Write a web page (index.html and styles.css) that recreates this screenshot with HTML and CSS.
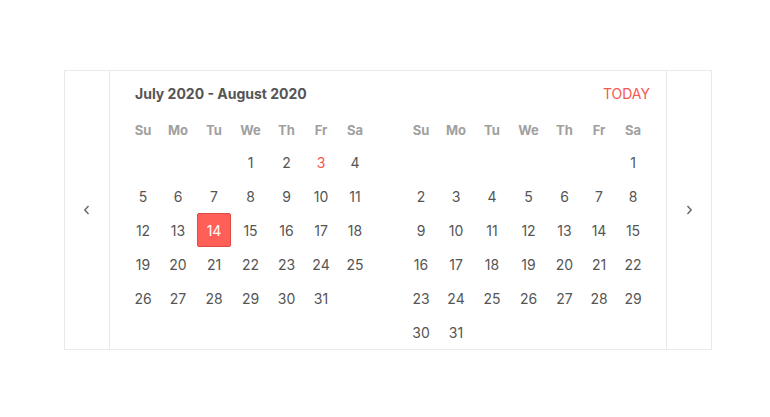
FILE: index.html
```html
<!DOCTYPE html>
<html lang="en">
<head>
  <meta charset="UTF-8">
  <meta name="viewport" content="width=device-width, initial-scale=1.0">
  <title>Date Picker</title>
  <link rel="stylesheet" href="styles.css">
</head>
<body>
  <div class="picker">
    <button class="nav-btn" aria-label="Previous month">
      <svg width="8" height="10" viewBox="0 0 8 10"><path d="M5.5 1 L1.8 5 L5.5 9" fill="none" stroke="#666" stroke-width="1.4"/></svg>
    </button>

    <div class="picker-body">
      <div class="picker-head">
        <span class="range-title">July 2020 - August 2020</span>
        <a href="#" class="today-link">TODAY</a>
      </div>

      <div class="months">
        <div class="month">
          <div class="wd">Su</div><div class="wd">Mo</div><div class="wd">Tu</div><div class="wd">We</div><div class="wd">Th</div><div class="wd">Fr</div><div class="wd">Sa</div>
          <div></div><div></div><div></div>
          <div class="day">1</div><div class="day">2</div><div class="day today">3</div><div class="day">4</div>
          <div class="day">5</div><div class="day">6</div><div class="day">7</div><div class="day">8</div><div class="day">9</div><div class="day">10</div><div class="day">11</div>
          <div class="day">12</div><div class="day">13</div><div class="day selected">14</div><div class="day">15</div><div class="day">16</div><div class="day">17</div><div class="day">18</div>
          <div class="day">19</div><div class="day">20</div><div class="day">21</div><div class="day">22</div><div class="day">23</div><div class="day">24</div><div class="day">25</div>
          <div class="day">26</div><div class="day">27</div><div class="day">28</div><div class="day">29</div><div class="day">30</div><div class="day">31</div>
        </div>

        <div class="month">
          <div class="wd">Su</div><div class="wd">Mo</div><div class="wd">Tu</div><div class="wd">We</div><div class="wd">Th</div><div class="wd">Fr</div><div class="wd">Sa</div>
          <div></div><div></div><div></div><div></div><div></div><div></div>
          <div class="day">1</div>
          <div class="day">2</div><div class="day">3</div><div class="day">4</div><div class="day">5</div><div class="day">6</div><div class="day">7</div><div class="day">8</div>
          <div class="day">9</div><div class="day">10</div><div class="day">11</div><div class="day">12</div><div class="day">13</div><div class="day">14</div><div class="day">15</div>
          <div class="day">16</div><div class="day">17</div><div class="day">18</div><div class="day">19</div><div class="day">20</div><div class="day">21</div><div class="day">22</div>
          <div class="day">23</div><div class="day">24</div><div class="day">25</div><div class="day">26</div><div class="day">27</div><div class="day">28</div><div class="day">29</div>
          <div class="day">30</div><div class="day">31</div>
        </div>
      </div>
    </div>

    <button class="nav-btn" aria-label="Next month">
      <svg width="8" height="10" viewBox="0 0 8 10"><path d="M2.5 1 L6.2 5 L2.5 9" fill="none" stroke="#666" stroke-width="1.4"/></svg>
    </button>
  </div>
</body>
</html>
```

FILE: styles.css
```css
body {
  margin: 0;
  padding: 70px 0 0 64px;
  font-family: Inter, "Noto Sans", sans-serif;
  background: #fff;
  color: #555;
}

.picker {
  display: flex;
  width: 646px;
  height: 278px;
  border: 1px solid #e9e9e9;
  box-sizing: content-box;
}

.nav-btn {
  width: 45px;
  flex: none;
  border: none;
  background: none;
  padding: 0;
  display: flex;
  align-items: center;
  justify-content: center;
  cursor: pointer;
}

.nav-btn:first-child {
  border-right: 1px solid #e9e9e9;
}

.nav-btn:last-child {
  border-left: 1px solid #e9e9e9;
}

.picker-body {
  flex: 1;
  padding: 10px 16px 0 16px;
}

.picker-head {
  display: flex;
  justify-content: space-between;
  align-items: center;
  height: 24px;
  padding: 0 0 0 9px;
}

.range-title {
  font-size: 14px;
  font-weight: 700;
  color: #555;
}

.today-link {
  font-size: 14px;
  color: #f5574e;
  text-decoration: none;
}

.months {
  display: flex;
  gap: 32px;
  margin-top: 10px;
}

.month {
  display: grid;
  grid-template-columns: 34px 36px 36px 37px 35px 34px 34px;
  grid-auto-rows: 34px;
  grid-template-rows: 30px;
  font-size: 14px;
}

.wd {
  display: flex;
  align-items: center;
  justify-content: center;
  font-size: 13px;
  font-weight: 700;
  color: #a0a0a0;
}

.day {
  display: flex;
  align-items: center;
  justify-content: center;
  color: #555;
}

.day.today {
  color: #f5574e;
}

.day.selected {
  width: 34px;
  height: 34px;
  box-sizing: border-box;
  justify-self: center;
  background: #ff5f57;
  border: 1px solid #e04a42;
  border-radius: 2px;
  color: #fff;
}
```
